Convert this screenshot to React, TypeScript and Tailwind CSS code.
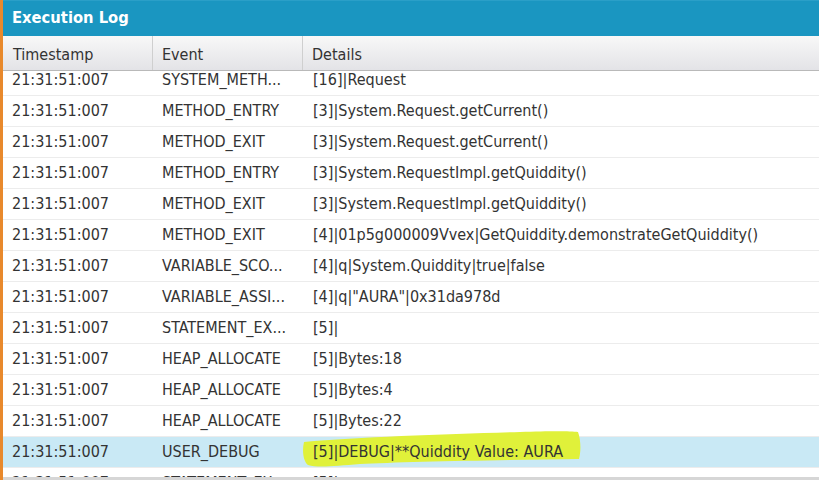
import React from "react";

type Row = { ts: string; ev: string; det: string };

const ROWS: Row[] = [
  { ts: "21:31:51:007", ev: "SYSTEM_METH...", det: "[16]|Request" },
  { ts: "21:31:51:007", ev: "METHOD_ENTRY", det: "[3]|System.Request.getCurrent()" },
  { ts: "21:31:51:007", ev: "METHOD_EXIT", det: "[3]|System.Request.getCurrent()" },
  { ts: "21:31:51:007", ev: "METHOD_ENTRY", det: "[3]|System.RequestImpl.getQuiddity()" },
  { ts: "21:31:51:007", ev: "METHOD_EXIT", det: "[3]|System.RequestImpl.getQuiddity()" },
  { ts: "21:31:51:007", ev: "METHOD_EXIT", det: "[4]|01p5g000009Vvex|GetQuiddity.demonstrateGetQuiddity()" },
  { ts: "21:31:51:007", ev: "VARIABLE_SCO...", det: "[4]|q|System.Quiddity|true|false" },
  { ts: "21:31:51:007", ev: "VARIABLE_ASSI...", det: "[4]|q|\"AURA\"|0x31da978d" },
  { ts: "21:31:51:007", ev: "STATEMENT_EX...", det: "[5]|" },
  { ts: "21:31:51:007", ev: "HEAP_ALLOCATE", det: "[5]|Bytes:18" },
  { ts: "21:31:51:007", ev: "HEAP_ALLOCATE", det: "[5]|Bytes:4" },
  { ts: "21:31:51:007", ev: "HEAP_ALLOCATE", det: "[5]|Bytes:22" },
  { ts: "21:31:51:007", ev: "USER_DEBUG", det: "[5]|DEBUG|**Quiddity Value: AURA" },
  { ts: "21:31:51:007", ev: "STATEMENT_EX...", det: "[5]|" },
];

export default function App() {
  return (
    <div
      className="w-[819px] h-[480px] overflow-hidden bg-white flex flex-col border-l-[3px] border-[#e8892c] text-[#333]"
      style={{ fontFamily: '"DejaVu Sans Condensed", "DejaVu Sans", Tahoma, sans-serif' }}
    >
      {/* titre */}
      <div className="h-[36px] shrink-0 bg-[#1a96c1] border-t border-[#2a9fc8] flex items-center px-[9px] pb-[1px]">
        <span className="text-white font-bold text-[16.4px]">Execution Log</span>
      </div>

      {/* colonnes */}
      <div className="h-[35px] shrink-0 flex bg-gradient-to-b from-[#f8f8f8] to-[#e3e3e7] border-b border-[#b9b9b9] text-[16px]">
        <div className="w-[150px] flex items-center pl-[10px] pt-[3px] border-r border-[#cfcfcf]">Timestamp</div>
        <div className="w-[150px] flex items-center pl-[9px] pt-[3px] border-r border-[#cfcfcf]">Event</div>
        <div className="flex-1 flex items-center pl-[9px] pt-[3px]">Details</div>
      </div>

      {/* lignes */}
      <div className="relative flex-1 overflow-hidden border-b-[3px] border-[#d6d6d6]">
        <div className="-mt-[6px] text-[16px]">
          {ROWS.map((r, i) => (
            <div
              key={i}
              className={`h-[31px] flex items-center border-b border-[#ececec] ${i === 12 ? "bg-[#c9e9f5]" : ""}`}
            >
              <div className="w-[150px] pl-[9px] whitespace-nowrap">{r.ts}</div>
              <div className="w-[150px] pl-[9px] whitespace-nowrap">{r.ev}</div>
              <div className="relative flex-1 pl-[10px] whitespace-nowrap">
                {i === 12 && (
                  <svg className="absolute left-[-3px] top-[-12px] pointer-events-none" width="285" height="42" viewBox="0 0 285 42">
                    <path
                      d="M4 14 C 60 9, 150 6, 220 4 C 250 3, 270 3, 278 4 C 281 12, 281 24, 279 31 C 200 32, 100 34, 60 36 C 35 38, 18 40, 8 37 C 3 33, 2 22, 4 14 Z"
                      fill="#e0f13a"
                    />
                  </svg>
                )}
                <span className="relative">{r.det}</span>
              </div>
            </div>
          ))}
        </div>
      </div>
    </div>
  );
}
